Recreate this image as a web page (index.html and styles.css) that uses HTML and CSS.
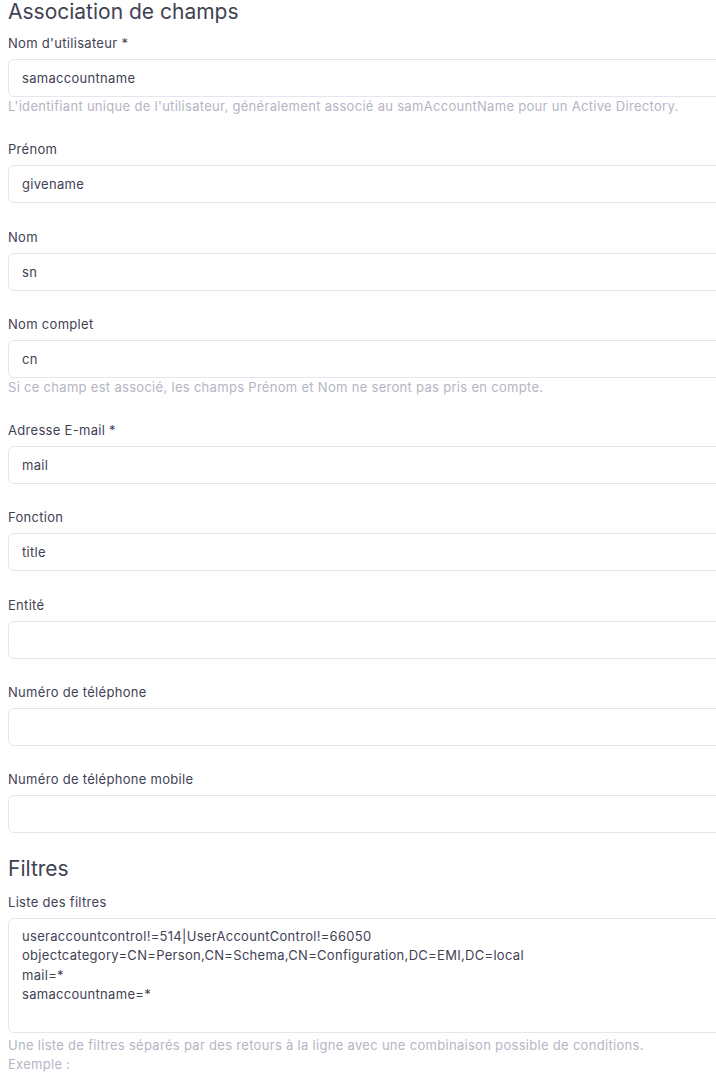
FILE: index.html
```html
<!DOCTYPE html>
<html lang="fr">
<head>
    <meta charset="utf-8">
    <meta name="viewport" content="width=device-width, initial-scale=1.0">
    <title>Association de champs</title>
    <link rel="stylesheet" href="styles.css">
</head>
<body>
    <div class="form">
        <h2 class="section-title">Association de champs</h2>

        <div class="field">
            <label class="field-label">Nom d'utilisateur *</label>
            <input class="field-input" type="text" value="samaccountname">
            <div class="field-help">L'identifiant unique de l'utilisateur, généralement associé au samAccountName pour un Active Directory.</div>
        </div>

        <div class="field">
            <label class="field-label">Prénom</label>
            <input class="field-input" type="text" value="givename">
        </div>

        <div class="field">
            <label class="field-label">Nom</label>
            <input class="field-input" type="text" value="sn">
        </div>

        <div class="field">
            <label class="field-label">Nom complet</label>
            <input class="field-input" type="text" value="cn">
            <div class="field-help">Si ce champ est associé, les champs Prénom et Nom ne seront pas pris en compte.</div>
        </div>

        <div class="field">
            <label class="field-label">Adresse E-mail *</label>
            <input class="field-input" type="text" value="mail">
        </div>

        <div class="field">
            <label class="field-label">Fonction</label>
            <input class="field-input" type="text" value="title">
        </div>

        <div class="field">
            <label class="field-label">Entité</label>
            <input class="field-input" type="text" value="">
        </div>

        <div class="field">
            <label class="field-label">Numéro de téléphone</label>
            <input class="field-input" type="text" value="">
        </div>

        <div class="field">
            <label class="field-label">Numéro de téléphone mobile</label>
            <input class="field-input" type="text" value="">
        </div>

        <h2 class="section-title section-title--next">Filtres</h2>

        <div class="field">
            <label class="field-label">Liste des filtres</label>
            <textarea class="field-input field-textarea" rows="5">useraccountcontrol!=514|UserAccountControl!=66050
objectcategory=CN=Person,CN=Schema,CN=Configuration,DC=EMI,DC=local
mail=*
samaccountname=*</textarea>
            <div class="field-help field-help--spaced">Une liste de filtres séparés par des retours à la ligne avec une combinaison possible de conditions.<br>Exemple :</div>
        </div>
    </div>
</body>
</html>
```

FILE: styles.css
```css
html, body {
    overflow-x: hidden;
}
body {
    margin: 0;
    padding: 0 0 0 8px;
    background-color: #ffffff;
    font-family: Inter, "Open Sans", Arial, sans-serif;
    color: #3f4254;
    letter-spacing: 0.3px;
}
.form {
    width: 740px; /* plus large que la fenêtre, coupé à droite */
}
.section-title {
    margin: 0 0 9px 0;
    font-size: 21px;
    line-height: 24px;
    font-weight: 400;
    letter-spacing: 0;
    color: #3f4254;
}
.section-title--next {
    margin-top: 4px;
    margin-bottom: 11px;
}
.field {
    margin-bottom: 23.3px;
}
.field-label {
    display: block;
    margin-bottom: 6px;
    font-size: 13px;
    line-height: 20px;
    color: #3f4254;
}
.field-input {
    display: block;
    box-sizing: border-box;
    width: 100%;
    height: 38px;
    margin: 0;
    padding: 8px 13px;
    border: 1px solid #e4e6ef;
    border-radius: 6px;
    background-color: #ffffff;
    font-family: inherit;
    font-size: 13px;
    line-height: 20px;
    letter-spacing: inherit;
    color: #3f4254;
    outline: none;
}
.field-textarea {
    height: 115px;
    line-height: 19.5px;
    resize: none;
    overflow: hidden;
}
.field-help {
    font-size: 13px;
    line-height: 19px;
    color: #b5b5c3;
}
.field-help--spaced {
    margin-top: 3px;
}
```
